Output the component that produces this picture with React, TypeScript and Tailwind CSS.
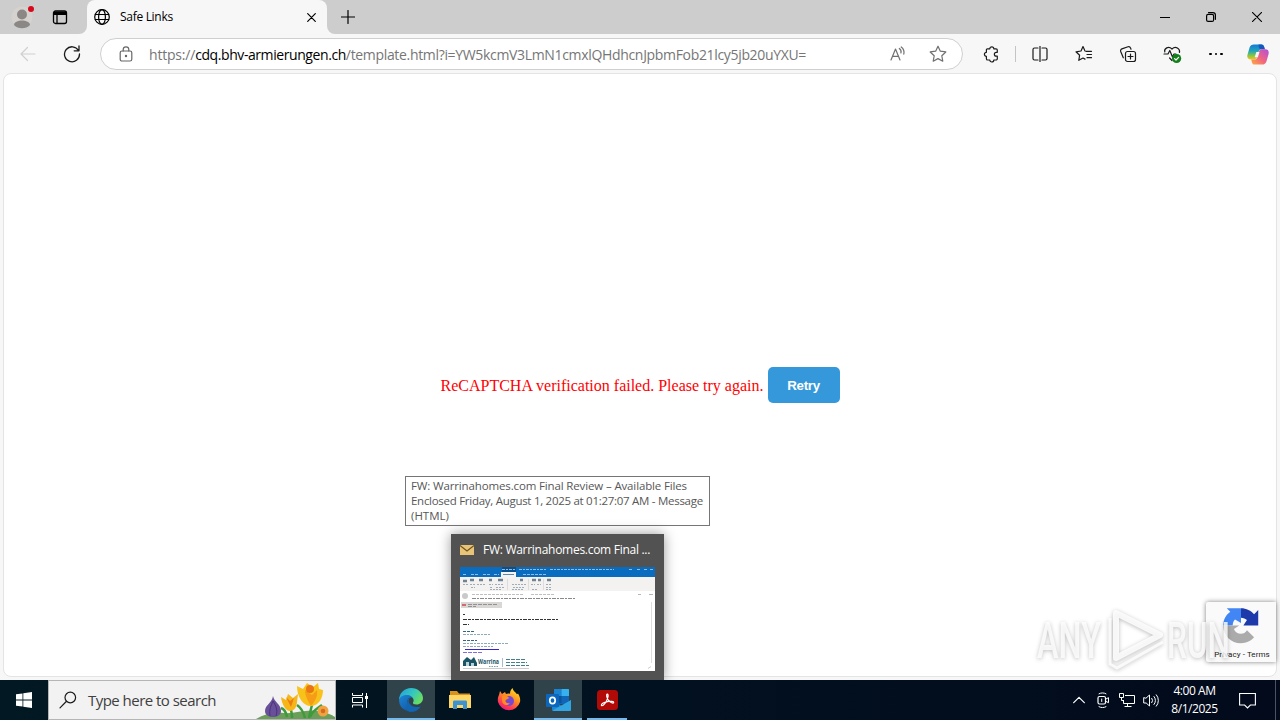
import type { ReactNode } from "react";

const ui = "font-['Open_Sans','Noto_Sans',sans-serif]";

function Icon({
  children,
  size = 18,
  box = 20,
  className = "",
}: {
  children: ReactNode;
  size?: number;
  box?: number;
  className?: string;
}) {
  return (
    <svg
      width={size}
      height={size}
      viewBox={`0 0 ${box} ${box}`}
      fill="none"
      stroke="currentColor"
      strokeWidth="1.2"
      strokeLinecap="round"
      strokeLinejoin="round"
      className={`shrink-0 ${className}`}
    >
      {children}
    </svg>
  );
}

function TitleBar() {
  return (
    <div className="flex h-[34px] shrink-0 bg-[#cdcdcd] text-black">
      <div className="flex w-11 items-center justify-center">
        <svg width="26" height="26" viewBox="0 0 26 26">
          <circle cx="13" cy="13" r="10.5" fill="#d5d2cf" />
          <circle cx="13" cy="10.5" r="5" fill="#8b8785" />
          <path d="M5 21c0-3 4-4.500 8-4.500s8 1.500 8 4.500c-2 2.500-5 3.200-8 3.200S7 23.500 5 21z" fill="#8b8785" />
          <circle cx="22" cy="5" r="3" fill="#d8081c" />
        </svg>
      </div>
      <div className="flex w-8 items-center justify-center">
        <svg width="16" height="16" viewBox="0 0 16 16" fill="none" stroke="currentColor" strokeWidth="1.300">
          <rect x="1.500" y="2" width="13" height="12.500" rx="2" />
          <path d="M2 3.500h12M2 5h12" strokeWidth="2" />
          <path d="M5 5v9" />
        </svg>
      </div>
      <div className="w-[11px] bg-[#f7f7f7]">
        <div className="h-full rounded-br-lg bg-[#cdcdcd]" />
      </div>
      <div className="flex w-[240px] items-center rounded-t-lg bg-[#f7f7f7] pl-[7px]">
        <Icon size={16} box={16}>
          <circle cx="8" cy="8" r="7.300" />
          <ellipse cx="8" cy="8" rx="3.400" ry="7.300" />
          <path d="M1.300 5.500h13.400M1.300 10.500h13.400" />
        </Icon>
        <span className="ml-[10px] grow text-[12px] tracking-[-0.3px]">Safe Links</span>
        <Icon size={9} box={9} className="mr-[11px]">
          <path d="M.7.7l7.600 7.600M8.300.7L.7 8.300" />
        </Icon>
      </div>
      <div className="w-2 bg-[#f7f7f7]">
        <div className="h-full rounded-bl-lg bg-[#cdcdcd]" />
      </div>
      <div className="flex w-[26px] items-center justify-center">
        <Icon size={14} box={14}>
          <path d="M7 .5v13M.5 7h13" />
        </Icon>
      </div>
      <div className="ml-auto flex">
        <div className="flex w-[46px] items-center justify-center">
          <Icon size={10} box={10}>
            <path d="M0 5.500h10" strokeWidth="1" />
          </Icon>
        </div>
        <div className="flex w-[46px] items-center justify-center">
          <Icon size={10} box={10}>
            <rect x=".6" y="2.400" width="7" height="7" rx="1.500" />
            <path d="M2.500.6h4.400a2.500 2.500 0 0 1 2.500 2.500v4.200" />
          </Icon>
        </div>
        <div className="flex w-[46px] items-center justify-center">
          <Icon size={10} box={10}>
            <path d="M.3.3l9.400 9.400M9.700.3L.3 9.700" strokeWidth="1.100" />
          </Icon>
        </div>
      </div>
    </div>
  );
}

function Copilot() {
  return (
    <svg width="22" height="21" viewBox="0 0 22 21">
      <defs>
        <linearGradient id="cpA" x1="0" y1="0" x2="0" y2="1">
          <stop offset="0" stopColor="#1479d8" />
          <stop offset=".45" stopColor="#23a7b8" />
          <stop offset=".75" stopColor="#8cc63f" />
          <stop offset="1" stopColor="#f5c518" />
        </linearGradient>
        <linearGradient id="cpB" x1="0" y1="1" x2="1" y2="0">
          <stop offset="0" stopColor="#ffad3b" />
          <stop offset=".45" stopColor="#f2677d" />
          <stop offset="1" stopColor="#b04de0" />
        </linearGradient>
      </defs>
      <path d="M7 .5h7.500c1.600 0 2.200 1 2.700 2.600l.6 2.200h-3.200c-1.800 0-2.500.9-3 2.600l-1.600 5.300c-.5 1.700-1.300 2.300-3 2.300H3.800C1 15.500-.3 13.600.5 10.800l2-7C3.300 1.300 4.600.5 7 .5z" fill="url(#cpA)" />
      <path d="M11.500.5h3c1.600 0 2.200 1 2.700 2.600l.6 2.200h-3.600c-1.400 0-2-.8-2.300-2z" fill="#1558bd" />
      <path d="M15 20.500H7.500c-1.600 0-2.200-1-2.700-2.600l-.6-2.400h3.200c1.800 0 2.500-.9 3-2.600L12 7.600c.5-1.700 1.300-2.300 3-2.300h3.200c2.800 0 4.100 1.900 3.300 4.900l-2 7c-.8 2.500-2.100 3.300-4.500 3.300z" fill="url(#cpB)" />
      <path d="M9.300 8h3.200l-1.600 5.200H7.700z" fill="#f7f7f7" />
    </svg>
  );
}

function Toolbar() {
  const cell = "flex w-11 shrink-0 items-center justify-center";
  return (
    <div className="flex h-[39px] shrink-0 items-center pt-px text-[#1b1b1b]">
      <div className="flex w-14 items-center justify-center text-[#d0d0d0]">
        <Icon size={16} box={16}>
          <path d="M15 8H1M7.500 1.500L1 8l6.500 6.500" />
        </Icon>
      </div>
      <div className="flex w-8 items-center justify-center">
        <Icon size={18} box={18}>
          <path d="M15.500 5.500A7.500 7.500 0 1 0 16.500 9M16 1v4.800h-4.800" strokeWidth="1.300" />
        </Icon>
      </div>
      <div className="ml-3 flex h-8 w-[863px] shrink-0 items-center rounded-full border border-[#cfcfcf] bg-white pl-[17px]">
        <Icon size={16} box={16} className="text-[#666]">
          <rect x="2.200" y="5" width="11.600" height="10" rx="1.800" />
          <path d="M5.200 5V3.600a2.800 2.800 0 0 1 5.600 0V5" />
          <circle cx="8" cy="10" r=".6" fill="currentColor" />
        </Icon>
        <span className="ml-[15px] grow whitespace-nowrap text-[14px] tracking-[-0.33px] text-[#767676]">
          <span className="tracking-[-0.2px]">https://</span>
          <span className="tracking-[-0.42px] text-black">cdq.bhv-armierungen.ch</span>
          /template.html?i=YW5kcmV3LmN1cmxlQHdhcnJpbmFob21lcy5jb20uYXU=
        </span>
        <Icon size={16} box={16} className="mr-[23px] text-[#707070]">
          <path d="M1 14L5.500 3 10 14M2.500 10.300h6M9.300 2.500a4 4 0 0 1 1.600 4.500M11.200 1a7 7 0 0 1 2.600 7.200" />
        </Icon>
        <Icon size={18} box={18} className="mr-[15px] text-[#707070]">
          <path d="M9 1.200l2.350 5 5.450.75-4 3.800.98 5.450L9 13.600l-4.780 2.600.98-5.450-4-3.800 5.450-.75z" />
        </Icon>
      </div>
      <div className={`${cell} ml-[6px]`}>
        <Icon size={17} box={17}>
          <path d="M4.500 2.800h2.300a2 2 0 0 1 4 0H13a1.300 1.300 0 0 1 1.300 1.300v2.200h-1a1.900 1.900 0 0 0 0 3.900h1v2.500A1.300 1.300 0 0 1 13 14h-2.200a2 2 0 0 1-4 0H4.700a1.300 1.300 0 0 1-1.300-1.300v-2.400a2 2 0 0 1 0-4V4.100a1.200 1.200 0 0 1 1.100-1.300z" />
        </Icon>
      </div>
      <div className="mx-[2px] h-4 w-px shrink-0 bg-[#c4c4c4]" />
      <div className={cell}>
        <Icon size={16} box={16}>
          <path d="M6 2H2.500C1.500 2 1 2.500 1 3.500v9c0 1 .5 1.500 1.500 1.500H6M10 2h3.500c1 0 1.500.5 1.500 1.500v9c0 1-.5 1.500-1.500 1.500H10M8 0v16" />
        </Icon>
      </div>
      <div className={cell}>
        <Icon size={18} box={18}>
          <path d="M11 6.300h5.500M12 9.500h4.500M12 12.700h4.500M10 6L8 1.500 6 6l-5 .8 3.600 3.500-.8 5L8 13l2 1.100" />
        </Icon>
      </div>
      <div className={cell}>
        <Icon size={18} box={18}>
          <rect x="6.500" y="6.500" width="10" height="10" rx="2" />
          <path d="M11.500 9v5M9 11.500h5M4.300 12.800L1.700 6.500a2 2 0 0 1 1.200-2.600L9 1.800a2 2 0 0 1 2.500 1.100l.5 1.300" />
        </Icon>
      </div>
      <div className={cell}>
        <Icon size={19} box={19}>
          <path d="M9 15.500L6.600 13M1.800 7C.8 3.500 5.500.5 9 4c3.500-3.500 8.300-.5 7.500 3.500M1 9h4l1.800-3.500L9.500 12 11 9h2" />
          <circle cx="13.600" cy="13.500" r="4.600" fill="#13801c" stroke="none" />
          <path d="M11.600 13.600l1.400 1.400 2.600-2.700" stroke="#fff" />
        </Icon>
      </div>
      <div className={`${cell} gap-[3px]`}>
        <i className="size-[2.5px] rounded-full bg-black" />
        <i className="size-[2.5px] rounded-full bg-black" />
        <i className="size-[2.5px] rounded-full bg-black" />
      </div>
      <div className="flex w-10 shrink-0 items-center justify-center">
        <Copilot />
      </div>
    </div>
  );
}

function RecaptchaBadge() {
  return (
    <div className="absolute right-0 bottom-[14px] flex h-[60px] w-[70px] flex-col items-center rounded-l-[2px] bg-[#fafafa] pt-[5px] shadow-[0_0_5px_#808080]">
      <svg width="38" height="38" viewBox="0 0 64 64">
        <path d="M61 31V5l-7 7C49 6 41 2 32 2v16c4 0 8 1.500 10 4l-6 9z" fill="#1c3aa9" />
        <path d="M32 2H8l6 6C7 13 2 21 2 31h16c0-4 1.500-8 4-10l10 6z" fill="#4285f4" />
        <path d="M2 31c0 17 13 30 30 30 9 0 17-4 22-10L42 39c-2 4-6 6-10 6-6 0-10-3-12-8l9-6z" fill="#ababab" />
      </svg>
      <span className="mt-[5px] whitespace-nowrap pl-[2px] font-[Roboto,sans-serif] text-[8px] leading-[10px] tracking-[0.08px] text-[#222]">Privacy - Terms</span>
    </div>
  );
}

function Watermark() {
  return (
    <svg
      className="absolute right-[40px] bottom-0 overflow-visible drop-shadow-[0_1px_2px_rgba(0,0,0,0.3)]"
      width="204"
      height="72"
      viewBox="0 0 204 72"
    >
      <g fill="#fff" fillOpacity=".8" fontFamily="Roboto, sans-serif" fontWeight="500" fontSize="50">
        <text x="5" y="54" textLength="64" lengthAdjust="spacingAndGlyphs">ANY</text>
        <text x="135" y="54" textLength="63" lengthAdjust="spacingAndGlyphs">RUN</text>
      </g>
      <path d="M84 9v45l44-23z" fill="none" stroke="#fff" strokeOpacity=".85" strokeWidth="6" strokeLinejoin="round" />
      <path d="M78 14v46l7 4 46-26" fill="none" stroke="#fff" strokeOpacity=".8" strokeWidth="3" />
    </svg>
  );
}

function MailThumbnail() {
  return (
    <svg width="195" height="104" viewBox="0 0 195 104" className="block">
      <rect width="195" height="104" fill="#fff" />
      <rect width="195" height="10" fill="#0a6cbf" />
      <rect x="42" width="14" height="5" fill="#08508f" />
      <rect x="41" y="5" width="15" height="5" fill="#f4f4f4" />
      <rect y="10" width="195" height="14" fill="#f3f2f1" />
      <g strokeWidth="1" fill="none">
        <path d="M42 2.500h14M59 2.500h27M90 2.500h64" stroke="#8fbce2" strokeDasharray="3 1 2 1" />
        <path d="M3 7.500h3M11 7.500h8M23 7.500h8M34 7.500h5M63 7.500h23M169 2.500h3M177 2.500h3M184 2.500h3M190 2.500h3" stroke="#8fbce2" strokeDasharray="3 1" />
        <path d="M43 7.500h11" stroke="#5c88b0" />
        <path d="M3 14h4M10 13h4M19 13h4M29 13h3M38 13h5M60 13h3M72 13h4M78 13h3M87 13h4" stroke="#718292" strokeWidth="2.500" />
        <path d="M3 17.500h5M10 17.500h5M17 17.500h8M29 17.500h4M35 17.500h9M52 17.500h14M71 17.500h4M77 17.500h4M86 17.500h6M11 20.500h4M30 20.500h3M36 20.500h8M53 20.500h12M86 20.500h6M30 22.500h12M52 22.500h12M72 22.500h5M86 22.500h6" stroke="#a3adb5" strokeDasharray="2 1" />
        <path d="M47.500 12v11M68.500 12v11M83.500 12v11" stroke="#dcdcdc" />
        <path d="M12 27.500h51M71 27.500h23" stroke="#c0c0c0" strokeDasharray="3 1" />
        <path d="M12 31.500h103" stroke="#8a8a8a" strokeDasharray="4 1 2 1" />
        <path d="M178 27.500h3M189 27.500h4" stroke="#b6b6b6" />
        <path d="M3 47.500h2M3 52.500h95M3 57.500h6" stroke="#333" strokeDasharray="4 1 3 1 2 1" />
        <path d="M3 64.500h12M3 73.500h14" stroke="#316783" strokeDasharray="3 1" />
        <path d="M3 67.500h27M3 76.500h45M3 79.500h30" stroke="#8fa9bd" strokeDasharray="3 1 2 1" />
        <path d="M5 82.500h34" stroke="#3525d0" />
        <path d="M3 85.500h20" stroke="#7d70de" strokeDasharray="4 1" />
        <path d="M46 92.500h20M46 95.500h21M46 98.500h23" stroke="#42808c" strokeDasharray="4 1" />
        <path d="M42.500 91v9" stroke="#a8bfc6" />
        <path d="M191.500 35v61" stroke="#ddd" />
        <path d="M3 101.500h66M188 101.500l3-2" stroke="#ccc" />
      </g>
      <circle cx="5" cy="29" r="3" fill="#c9c9c9" />
      <rect x="1" y="35" width="41" height="6" fill="#d9d7d6" />
      <path d="M2 38h4" stroke="#d56a6a" strokeWidth="2" />
      <path d="M8 37.500h29M8 39.500h8" stroke="#929292" strokeDasharray="4 1" />
      <path d="M3 99v-5l4-4 4 3 3-3 3 6v3z" fill="#1a5365" />
      <path d="M6 99v-4h3v4zM11 99v-3h3v3z" fill="#b8d2d8" />
      <text x="18" y="97" fontFamily="Open Sans, sans-serif" fontSize="7" fontWeight="700" fill="#1a5365" textLength="21" lengthAdjust="spacingAndGlyphs">Warrina</text>
      <path d="M29 99.500h10" stroke="#7aa0ab" strokeDasharray="1.500 1" />
    </svg>
  );
}

function WindowPreview() {
  return (
    <div className="absolute top-[534px] left-[451px] h-[146px] w-[213px] bg-[#525252] px-[9px] shadow-[0_0_12px_rgba(0,0,0,0.4)]">
      <div className="flex h-[33px] items-center pb-px text-white">
        <svg width="14" height="10" viewBox="0 0 14 10">
          <rect width="14" height="10" fill="#e8c477" />
          <path d="M0 .5l7 5.500 7-5.500" fill="none" stroke="#6c5320" strokeWidth="1.200" />
        </svg>
        <span className="ml-[9px] whitespace-nowrap text-[12px] tracking-[-0.28px]">FW: Warrinahomes.com Final ...</span>
      </div>
      <MailThumbnail />
    </div>
  );
}

function SearchFlowers() {
  return (
    <svg width="80" height="38" viewBox="0 0 80 38">
      <path d="M1 38c8-5 18-7 28-6s22-4 34-2c8 1 14 4 17 6v2z" fill="#6b9e58" />
      <path d="M37 37c0-6-1-10-4-14M54 37c1-7 3-12 4-17M50 37c-2-8-5-11-8-13M55 36c2-6 8-9 12-12M32 36c-1-6-3-8-6-9" fill="none" stroke="#3f9a3c" strokeWidth="2.500" />
      <path d="M18 15c1 6 8 8 8 15 0 4-4 6-8 6s-8-2-8-6c0-6 7-8 8-15z" fill="#69509a" />
      <path d="M18 20c-2 5-4 8-3 15M18 20c3 5 5 9 3 15" fill="none" stroke="#493476" />
      <path d="M26 16l5 3 2-6 5 4 5-4-1 8c0 5-3 9-7 9s-8-6-9-14z" fill="#f6b619" />
      <path d="M31 16l4 4 4-3-3 9z" fill="#ea7e15" />
      <path d="M42 5l6 3 4-6 6 4 5-4 1 6 4 1c0 8-4 15-11 16C49 26 42 17 42 5z" fill="#f9c21b" />
      <path d="M50 9c0 6 3 11 6 16 4-5 7-9 6-16l-5 5z" fill="#f59d16" />
      <circle cx="55" cy="8" r="4" fill="#e97613" />
      <circle cx="68" cy="30" r="5.500" fill="#f0a343" />
      <circle cx="68" cy="30" r="2.300" fill="#d66a1f" />
    </svg>
  );
}

function EdgeLogo() {
  return (
    <svg width="24" height="24" viewBox="0 0 24 24">
      <defs>
        <linearGradient id="edA" x1="0" y1="0" x2="1" y2=".5">
          <stop offset="0" stopColor="#219ddd" />
          <stop offset=".6" stopColor="#35c8bd" />
          <stop offset="1" stopColor="#68dd63" />
        </linearGradient>
        <linearGradient id="edB" x1="0" y1="0" x2="1" y2="1">
          <stop offset="0" stopColor="#1b85d7" />
          <stop offset="1" stopColor="#114a91" />
        </linearGradient>
      </defs>
      <path d="M0 12A12 12 0 0 1 12 0c7 0 12 5 12 10 0 4-3 6.500-6.500 6.500-2.500 0-4-1-3.500-2 1.500-2 .5-6-4-6.500C5 7.500 1 9.500 0 12z" fill="url(#edA)" />
      <path d="M0 12c1-3.500 5-5.500 9-5 2 .3 3.500 1.300 4.300 2.500C9 9 8 12 8.500 14.500c1 4.500 6 7 13 4.500A12 12 0 0 1 0 12z" fill="url(#edB)" />
      <path d="M8.500 14.500c-.4-2.500.8-4.500 2.500-5-4 5 2 11.500 10.500 9-3 5.500-9 5.500-11.500 5C7 22 8 18 8.500 14.500z" fill="#1266b1" />
    </svg>
  );
}

function ExplorerLogo() {
  return (
    <svg width="22" height="20" viewBox="0 0 22 20">
      <path d="M1 1h7l2 2.500h11V8H1z" fill="#d9921c" />
      <path d="M0 5h22v13H0z" fill="#fcd667" />
      <path d="M4 19v-7c0-1 .5-1.500 1.500-1.500h11c1 0 1.500.5 1.500 1.500v7h-4v-4H8v4z" fill="#3d93d2" />
    </svg>
  );
}

function FirefoxLogo() {
  return (
    <svg width="24" height="24" viewBox="0 0 24 24">
      <defs>
        <linearGradient id="ff" x1=".8" y1="0" x2=".2" y2="1">
          <stop offset="0" stopColor="#ffe226" />
          <stop offset=".4" stopColor="#ff9422" />
          <stop offset=".75" stopColor="#ff3c52" />
          <stop offset="1" stopColor="#e31587" />
        </linearGradient>
      </defs>
      <path d="M2 7l1-4 2 3 3-2 1 2c1-.6 3-.7 4-.3 0-2.300 1-4.200 2.500-5.700.5 3 3 4 4.500 6.300l1-.8c2 3 2.500 6 2 8.500A11.500 11.500 0 0 1 1 14C.5 11 1 9 2 7z" fill="url(#ff)" />
      <circle cx="12" cy="13" r="5" fill="#7749d3" />
      <path d="M5 8c3-1 6 0 7 2-1 1.500-3 1-3.500 2.500-.3 2 2 3.500 4.500 2.500-2 3.500-8 2.500-8-3z" fill="#ff8b24" />
    </svg>
  );
}

function OutlookLogo() {
  return (
    <svg width="25" height="24" viewBox="0 0 25 24">
      <rect x="8" y="1" width="15" height="15" rx="1" fill="#1066b5" />
      <path d="M8 1h7.500v7H8z" fill="#1a83d2" />
      <path d="M15.500 1H22c.6 0 1 .4 1 1v6h-7.500z" fill="#35b1ef" />
      <path d="M8 8h7.500v7H8z" fill="#0c529c" />
      <path d="M6 12l10 6 9-6v9.500c0 .8-.5 1.500-1.500 1.500h-16c-1 0-1.500-.7-1.500-1.500z" fill="#1b85cf" />
      <path d="M25 12L6.500 22.600c.3.300.6.4 1 .4h16c1 0 1.500-.7 1.500-1.500z" fill="#32a5e3" />
      <rect y="6" width="13" height="13" rx="1" fill="#0b67bd" />
      <ellipse cx="6.500" cy="12.500" rx="2.700" ry="3.200" fill="none" stroke="#fff" strokeWidth="1.700" />
    </svg>
  );
}

function AcrobatLogo() {
  return (
    <svg width="21" height="20" viewBox="0 0 21 20">
      <rect width="21" height="20" rx="3.500" fill="#b20b07" />
      <path d="M10.300 4.200c1.500 0 .8 4-1.300 7.800-1.600 2.700-3.700 4.300-4.500 3.500-.9-1.200 2.200-3.200 6-3.900 3.500-.7 6.300-.3 6.200.9-.2 1.300-3.400.1-5.200-2.200-1.500-1.900-2.600-6-1.200-6.100z" fill="none" stroke="#fff" strokeWidth="1.200" />
    </svg>
  );
}

function AppButton({ children, active, running }: { children: ReactNode; active?: boolean; running?: boolean }) {
  return (
    <div className={`flex h-10 w-12 flex-col items-center ${active ? "bg-[#30434b]" : ""}`}>
      <div className="flex h-[38px] items-center pt-[2px]">{children}</div>
      {(active || running) && <div className={`h-[2px] bg-[#76b9ed] ${active ? "w-full" : "w-10"}`} />}
    </div>
  );
}

function Taskbar() {
  return (
    <div className="relative flex h-10 shrink-0 items-center bg-linear-to-r from-[#021822] to-[#020a1c] text-white">
      <div className="flex w-12 justify-center">
        <svg width="16" height="16" viewBox="0 0 16 16" fill="#fff">
          <path d="M0 2.300l6.500-.9v6.100H0zM7.300 1.300L16 0v7.500H7.300zM0 8.400h6.500v6.200L0 13.700zM7.300 8.400H16V16l-8.700-1.200z" />
        </svg>
      </div>
      <div className="flex h-10 w-[288px] items-center border border-[#b5b5b5] bg-[#f2f2f2] text-[#1b1b1b]">
        <Icon size={18} box={18} className="ml-[10px]">
          <circle cx="11.300" cy="6.500" r="5.300" />
          <path d="M7.300 10.500L1 16.800" />
        </Icon>
        <span className="ml-[11px] grow whitespace-nowrap text-[15px] tracking-[-0.53px] text-[#404040]">Type here to search</span>
        <SearchFlowers />
      </div>
      <div className="mr-[3px] flex w-12 justify-center">
        <svg width="16" height="16" viewBox="0 0 16 16" fill="none" stroke="#fff">
          <path d="M.5 1v2.500h10V1M.5 15.500V13h10v2.500M.5 5.500h10v5H.5zM14.500 1v15" />
          <path d="M13 5.500h3" strokeWidth="3" />
        </svg>
      </div>
      <div className="flex gap-px">
        <AppButton active><EdgeLogo /></AppButton>
        <AppButton><ExplorerLogo /></AppButton>
        <AppButton><FirefoxLogo /></AppButton>
        <AppButton active><OutlookLogo /></AppButton>
        <AppButton running><AcrobatLogo /></AppButton>
      </div>
      <div className="ml-auto flex items-center">
        <div className="flex w-6 justify-center">
          <Icon size={12} box={12}>
            <path d="M.7 8.700L6 3.300l5.300 5.400" />
          </Icon>
        </div>
        <div className="flex w-6 justify-center">
          <Icon size={16} box={16}>
            <rect x="3" y="4.500" width="7.500" height="7.500" rx="1.500" />
            <path d="M10.500 7.200l3-1.500v5l-3-1.500M4 1.800c2-1.200 5-1.200 7 0M4 14.700c2 1.200 5 1.200 7 0M6.700 7v2.500" strokeWidth="1" />
          </Icon>
        </div>
        <div className="flex w-6 justify-center">
          <svg width="16" height="16" viewBox="0 0 16 16" fill="none" stroke="#fff">
            <path d="M6 3.500h9.500v8H4.500V8M8.500 11.500v3M5.500 14.500h7M.5 1.500h4v4h-4zM2.500 5.500v3h2" />
          </svg>
        </div>
        <div className="flex w-6 justify-center">
          <Icon size={17} box={17}>
            <path d="M.7 6v5h2.500L6.500 14V3L3.200 6zM8.800 6.300a3.500 3.500 0 0 1 0 4.400M11 4.500a6 6 0 0 1 0 8M13.300 2.800a8.500 8.500 0 0 1 0 11.400" strokeWidth="1" />
          </Icon>
        </div>
        <div className="flex w-[63px] flex-col items-center whitespace-nowrap text-[12px] leading-[18px] tracking-[-0.45px]">
          <span>4:00 AM</span>
          <span>8/1/2025</span>
        </div>
        <div className="flex w-[42px] justify-center">
          <svg width="17" height="17" viewBox="0 0 17 17" fill="none" stroke="#fff" strokeWidth="1.100">
            <path d="M.6 1.500h15.800v11.500h-5l-2.900 3-2.900-3h-5z" />
          </svg>
        </div>
        <div className="mr-1 ml-[7px] h-10 w-px bg-[#4b535e]" />
      </div>
    </div>
  );
}

export default function App() {
  return (
    <div className={`relative flex h-[720px] w-[1280px] flex-col overflow-hidden bg-[#f7f7f7] ${ui}`}>
      <TitleBar />
      <Toolbar />
      <main className="relative mx-[3px] mb-[3px] flex grow items-start justify-center rounded-lg border border-[#e4e4e4] bg-white pt-[293px]">
        <div className="flex items-center gap-1">
          <span className="whitespace-nowrap pt-px font-['Liberation_Serif',serif] text-[16px] text-[#f00]">
            ReCAPTCHA verification failed. Please try again.
          </span>
          <button className="h-[36px] w-[72px] rounded-[5px] bg-[#3498db] pt-px font-['Liberation_Sans',sans-serif] text-[13.333px] font-bold tracking-[-0.3px] text-white">
            Retry
          </button>
        </div>
        <RecaptchaBadge />
        <Watermark />
      </main>
      <div className="absolute top-[476px] left-[405px] h-[50px] w-[305px] border border-[#767676] bg-white pt-px pl-[5px] text-[11.5px] leading-[15px] whitespace-nowrap text-[#575757]">
        <p className="tracking-[-0.14px]">FW: Warrinahomes.com Final Review – Available Files</p>
        <p className="tracking-[-0.28px]">Enclosed Friday, August 1, 2025 at 01:27:07 AM - Message</p>
        <p>(HTML)</p>
      </div>
      <WindowPreview />
      <Taskbar />
    </div>
  );
}
